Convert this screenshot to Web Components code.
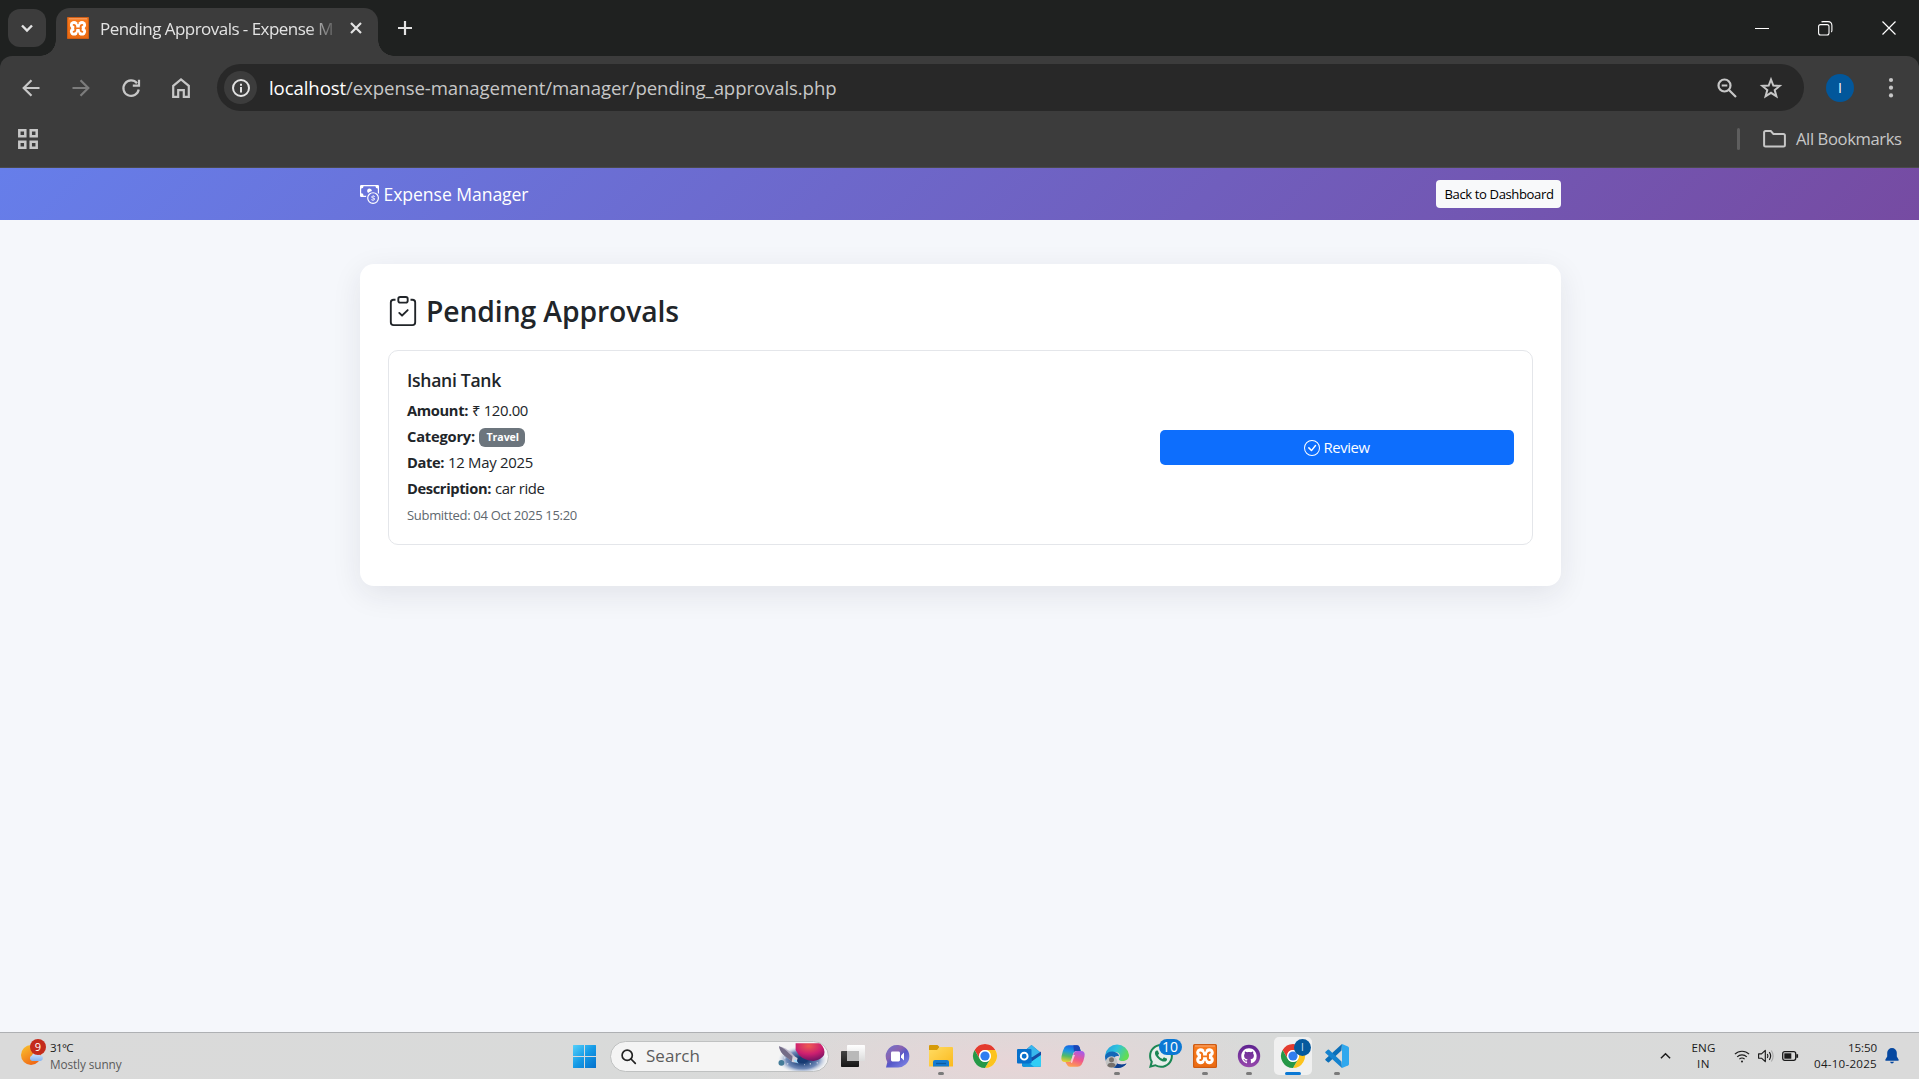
<!DOCTYPE html>
<html lang="en">
<head>
<meta charset="utf-8">
<title>Pending Approvals - Expense Manager</title>
<style>
html,body{margin:0;height:100%;overflow:hidden}
body{font-family:"Open Sans","Noto Sans",sans-serif;background:#f5f7fb}
</style>
</head>
<body>
<desktop-screen></desktop-screen>
<script>
const bi = (p, s='0 0 16 16') => `<svg viewBox="${s}" fill="currentColor">${p}</svg>`;
const st = (p, s, w=2, extra='') => `<svg viewBox="${s}" fill="none" stroke="currentColor" stroke-width="${w}" ${extra}>${p}</svg>`;
const chrome = `<svg viewBox="0 0 24 24"><circle cx="12" cy="12" r="12" fill="#fff"/>
<path d="M1.6 6A12 12 0 0 1 22.4 6H12a6 6 0 0 0-5.2 9z" fill="#e33b2e"/>
<path d="M22.4 6A12 12 0 0 1 12 24l5.2-9A6 6 0 0 0 12 6z" fill="#fcc31e"/>
<path d="M12 24A12 12 0 0 1 1.6 6l5.2 9a6 6 0 0 0 10.4 0z" fill="#269847"/>
<circle cx="12" cy="12" r="5.9" fill="#fff"/><circle cx="12" cy="12" r="4.6" fill="#2f7df0"/></svg>`;
const xampp = `<svg viewBox="0 0 24 24"><defs><linearGradient id="x" x2="0" y2="1"><stop stop-color="#e0722a"/><stop offset=".15" stop-color="#f87a1c"/><stop offset="1" stop-color="#ea6a12"/></linearGradient></defs><rect width="24" height="24" rx="1.5" fill="url(#x)"/><rect x=".6" y=".6" width="22.8" height="22.8" rx="1.2" fill="none" stroke="#c95a14" stroke-width="1"/><path d="M2 2h20" stroke="#ffae76" stroke-width="1"/>
<g fill="#fff"><circle cx="7.700" cy="8.800" r="4.500"/><circle cx="16.300" cy="8.800" r="4.500"/><circle cx="7.700" cy="15.800" r="4.500"/><circle cx="16.300" cy="15.800" r="4.500"/><rect x="5" y="8" width="14" height="8.500"/></g>
<g fill="none" stroke="#f2741a" stroke-width="2.100" stroke-linecap="round"><path d="M7.300 8.600Q9.600 8.600 9 12.300 9.600 16 7.300 16M16.700 8.600Q14.400 8.600 15 12.300 14.400 16 16.700 16"/><path d="M9 12.300h6" stroke-width="1.800"/></g><path d="M2.900 12.300l1.500-1.100v2.200zM21.100 12.300l-1.500-1.100v2.200zM12 8.200l-1-2h2zM12 16.400l-1 2h2z" fill="#f2741a"/></svg>`;
const ICONS = {
chevron: st('<path d="M1 1.500 6 6.500l5-5"/>','0 0 12 8',2.4),
close: st('<path d="M1 1l10 10M11 1 1 11"/>','0 0 12 12',2.2),
plus: st('<path d="M7 0v14M0 7h14"/>','0 0 14 14',2.2),
back: st('<path d="M17.500 9H2M9.500 1.200 1.700 9l7.800 7.800"/>','0 0 18 18',2.2),
forward: st('<path d="M.5 9H16M8.500 1.200 16.300 9l-7.800 7.800"/>','0 0 18 18',2.2),
reload: st('<path d="M16.700 10.500A7.700 7.700 0 1 1 15 4.200"/><path d="M17 .8V6.700H10.800" />','0 0 18 18',2.2),
home: st('<path d="M1.200 7.800 9 1.500l7.800 6.300V18.900H11.800V12.200H6.200v6.700H1.200z"/>','0 0 18 20',2.2),
info: st('<circle cx="9" cy="9" r="8"/><path d="M9 8v5.500M9 4.700v2"/>','0 0 18 18',2),
zoomout: st('<circle cx="7.500" cy="7.500" r="6"/><path d="M12 12l7 7M4.700 7.500h5.600"/>','0 0 20 20',2.2),
star: st('<path d="M11 2.500l2.300 6 6.400.4-5 4.100 1.700 6.300L11 15.800l-5.400 3.500L7.300 13l-5-4.100 6.400-.4z"/>','0 0 22 22',2),
apps: st('<path d="M1.300 1.300h6v6h-6zM12.700 1.300h6v6h-6zM1.300 12.700h6v6h-6zM12.700 12.700h6v6h-6z"/>','0 0 20 20',2.5),
folder: st('<path d="M1.100 2.600Q1.100 1.100 2.600 1.100H7.800l2.600 2.800H20.400q1.500 0 1.500 1.500V15q0 1.500-1.500 1.500H2.600q-1.500 0-1.500-1.500z"/>','0 0 23 18',2),
dots: bi('<circle cx="3" cy="3" r="2.100"/><circle cx="3" cy="10.700" r="2.100"/><circle cx="3" cy="18.400" r="2.100"/>','0 0 6 21'),
min: st('<path d="M0 .5h14"/>','0 0 14 1',1),
restore: st('<rect x=".6" y="3.600" width="10.400" height="10.400" rx="2"/><path d="M3.500 1.200Q4 .6 5 .6h5q3.900 0 3.900 3.900v5q0 1-.6 1.600"/>','0 0 14.500 14.500',1.1),
wclose: st('<path d="M.5 .5l13 13M13.500 .5l-13 13"/>','0 0 14 14',1.2),
cash: bi('<path fill-rule="evenodd" d="M11 15a4 4 0 1 0 0-8 4 4 0 0 0 0 8m5-4a5 5 0 1 1-10 0 5 5 0 0 1 10 0"/><path d="M9.438 11.944c.047.596.518 1.060 1.363 1.116v.44h.375v-.443c.875-.061 1.386-.529 1.386-1.207 0-.618-.39-.936-1.090-1.100l-.296-.07v-1.200c.376.043.614.248.671.532h.658c-.047-.575-.54-1.024-1.329-1.073V8.500h-.375v.45c-.747.073-1.255.522-1.255 1.158 0 .562.378.92 1.007 1.066l.248.061v1.272c-.384-.058-.639-.27-.696-.563h-.668zm1.360-1.354c-.369-.085-.569-.26-.569-.522 0-.294.216-.514.572-.578v1.100zm.432.746c.449.104.655.272.655.569 0 .339-.257.571-.709.614v-1.195z"/><path d="M1 0a1 1 0 0 0-1 1v8a1 1 0 0 0 1 1h4.083q.088-.517.258-1H3a2 2 0 0 0-2-2V3a2 2 0 0 0 2-2h10a2 2 0 0 0 2 2v3.528c.38.34.717.728 1 1.154V1a1 1 0 0 0-1-1z"/><path d="M9.998 5.083 10 5a2 2 0 1 0-3.132 1.650 6 6 0 0 1 3.130-1.567"/>'),
clip: bi('<path fill-rule="evenodd" d="M10.854 7.146a.5.5 0 0 1 0 .708l-3 3a.5.5 0 0 1-.708 0l-1.500-1.500a.5.5 0 1 1 .708-.708L7.500 9.793l2.646-2.647a.5.5 0 0 1 .708 0"/><path d="M4 1.500H3a2 2 0 0 0-2 2V14a2 2 0 0 0 2 2h10a2 2 0 0 0 2-2V3.500a2 2 0 0 0-2-2h-1v1h1a1 1 0 0 1 1 1V14a1 1 0 0 1-1 1H3a1 1 0 0 1-1-1V3.500a1 1 0 0 1 1-1h1z"/><path d="M9.500 1a.5.5 0 0 1 .5.5v1a.5.5 0 0 1-.5.5h-3a.5.5 0 0 1-.5-.5v-1a.5.5 0 0 1 .5-.5zm-3-1A1.500 1.500 0 0 0 5 1.500v1A1.500 1.500 0 0 0 6.500 4h3A1.500 1.500 0 0 0 11 2.500v-1A1.500 1.500 0 0 0 9.500 0z"/>'),
check: bi('<path d="M8 15A7 7 0 1 1 8 1a7 7 0 0 1 0 14m0 1A8 8 0 1 0 8 0a8 8 0 0 0 0 16"/><path d="m10.970 4.970-.02.022-3.473 4.425-2.093-2.094a.75.75 0 0 0-1.060 1.060L6.970 11.030a.75.75 0 0 0 1.079-.02l3.992-4.990a.75.75 0 0 0-1.071-1.050"/>'),
xampp, chrome,
weather:`<svg viewBox="0 0 24 24"><defs><linearGradient id="s" x1=".2" x2=".8" y2="1"><stop stop-color="#f9bd2d"/><stop offset="1" stop-color="#ef5f13"/></linearGradient><linearGradient id="c" x2="0" y2="1"><stop stop-color="#d8e8fb"/><stop offset="1" stop-color="#86b4f2"/></linearGradient></defs><circle cx="10" cy="12" r="10" fill="url(#s)"/><path d="M11 18a3 3 0 0 1-.3-5.600 4.500 4.500 0 0 1 8-.5A3.100 3.100 0 0 1 19.500 18z" fill="url(#c)"/></svg>`,
win:`<svg viewBox="0 0 23 23"><defs><linearGradient id="v" gradientUnits="userSpaceOnUse" x1="0" y1="0" x2="23" y2="23"><stop stop-color="#55d0fa"/><stop offset=".5" stop-color="#159ae6"/><stop offset="1" stop-color="#0470cc"/></linearGradient></defs><path d="M0 .5Q0 0 .5 0H11v11H0zM12 0h10.500q.5 0 .5.500V11H12zM0 12h11v11H.5q-.5 0-.5-.5zM12 12h11v10.500q0 .5-.5.500H12z" fill="url(#v)"/></svg>`,
search: st('<circle cx="6.200" cy="6.200" r="5.100"/><path d="M10 10l4.300 4.300" stroke-linecap="round"/>','0 0 15 15',1.7),
space:`<svg viewBox="0 0 50 26"><defs><radialGradient id="b"><stop offset=".2" stop-color="#173b73"/><stop offset=".65" stop-color="#4d6ea8" stop-opacity=".8"/><stop offset="1" stop-color="#c7d3e8" stop-opacity="0"/></radialGradient><radialGradient id="p" cx=".45" cy=".15" r=".85"><stop stop-color="#ee5b50"/><stop offset=".55" stop-color="#cc1f70"/><stop offset="1" stop-color="#721463"/></radialGradient></defs><ellipse cx="26" cy="17" rx="25" ry="14" fill="url(#b)"/><path d="M19 0H44Q50 6 48 12 45 17 37 18 24 18 19 7Z" fill="url(#p)"/><circle cx="4.500" cy="20" r="3" fill="#447c99"/><path d="M2 3Q8 4 14 9l6 6-4 4-8-6Q3 9 2 3z" fill="#b8b3c7"/><path d="M2 3Q8 5 13 11l6 5-3 3-8-6Q3 9 2 3z" fill="#746c87"/><path d="M16 13l5 2-1 5-5-1z" fill="#d5d2dc"/><path d="M19 16l3 5-5-3z" fill="#9cdcff"/><g fill="#fff"><circle cx="11" cy="21" r=".6"/><circle cx="34" cy="21" r=".7"/><circle cx="41" cy="20" r=".6"/><circle cx="8" cy="15" r=".6"/><circle cx="28" cy="22" r=".5"/></g></svg>`,
taskview:`<svg viewBox="0 0 24 24"><defs><linearGradient id="t" x2="0" y2="1"><stop stop-color="#444"/><stop offset="1" stop-color="#151515"/></linearGradient><linearGradient id="u" x2="0" y2="1"><stop stop-color="#fff"/><stop offset="1" stop-color="#dcdcdc"/></linearGradient></defs><rect y="7" width="18" height="16" rx=".8" fill="url(#t)"/><rect x="6" y="1" width="18" height="16" rx=".8" fill="url(#u)"/><rect x="6" y="7" width="12" height="10" fill="#b9b9b9"/></svg>`,
chat:`<svg viewBox="0 0 24 24"><defs><linearGradient id="h" x2=".8" y2="1"><stop stop-color="#6d74cf"/><stop offset=".4" stop-color="#8a63b0"/><stop offset=".6" stop-color="#5557c9"/><stop offset="1" stop-color="#7e84e4"/></linearGradient></defs><path d="M12 1a11.300 11.300 0 1 1 0 22.500H1l1.300-5.500A11.300 11.300 0 0 1 12 1z" fill="url(#h)"/><rect x="6" y="7.500" width="9" height="10" rx="1.400" fill="#fff"/><path d="M16 11.500l3-3v8l-3-3z" fill="#fff"/></svg>`,
files:`<svg viewBox="0 0 24 24"><defs><linearGradient id="f" x2="1" y2="1"><stop stop-color="#ffdc63"/><stop offset="1" stop-color="#fbb91d"/></linearGradient></defs><path d="M0 2Q0 1 1 1H8.500l2 2-2 3H0z" fill="#d69a09"/><path d="M0 6h8l3-3H23q1 0 1 1V22q0 .6-.6.600H.6Q0 22.600 0 22z" fill="url(#f)"/><path d="M4 22.600V18q0-2 2-2H18q2 0 2 2v4.600z" fill="#147bd1"/><path d="M7 19.500H17" stroke="#0c5b9f" stroke-width="1.300"/></svg>`,
outlook:`<svg viewBox="0 0 24 24"><path d="M5 9L14.500 1 24 9v12.500q0 1.300-1.300 1.300H6.500Q5 22.800 5 21z" fill="#1171c4"/><path d="M9 6l5.500-5L24 9l-6 4H9z" fill="#39b7ed"/><path d="M24 10L8 22.800H22.500q1.500 0 1.500-1.500z" fill="#31cdf5"/><path d="M5 14l12 8.800H7q-2 0-2-2z" fill="#1194dc"/><path d="M14 14l10-6.500V11l-9 6z" fill="#174ba3"/><rect y="5" width="14.500" height="14.500" rx="1" fill="#0870cb"/><circle cx="7.200" cy="12.200" r="3.400" stroke="#fff" stroke-width="1.900" fill="none"/></svg>`,
copilot:`<svg viewBox="0 0 24 24"><defs><linearGradient id="k" x1=".4" x2=".2" y2="1"><stop stop-color="#1663e2"/><stop offset=".35" stop-color="#1e99df"/><stop offset=".65" stop-color="#53bb65"/><stop offset="1" stop-color="#f5cf2c"/></linearGradient><linearGradient id="l" x1=".7" x2=".3" y2="1"><stop stop-color="#a85be8"/><stop offset=".5" stop-color="#f0588a"/><stop offset="1" stop-color="#ffa34c"/></linearGradient></defs><path d="M7.500 1.200H16q2 0 2.600 2L19.700 7H15q-2 0-2.600 2l-2 6.500Q9.700 18 7 18H4Q-.500 18 .5 12.500q1-6 3-9.300Q5 1.200 7.500 1.200z" fill="url(#k)"/><path d="M12.400 1.200H16q2 0 2.600 2L19.700 7H15q-1.500 0-2 1z" fill="#1b46b5"/><path d="M16.500 22.800H9q-2.300 0-3-2L4.400 18H8q2 0 2.600-2l2.300-7Q13.600 7 16 7h4q4.500 0 3.500 5.500-1 5.500-3 8.300-1.500 2-4 2z" fill="url(#l)"/><path d="M12 11l-2 6.500Q9.400 19 11 19l3-8z" fill="#fff" opacity=".65"/></svg>`,
edge:`<svg viewBox="0 0 24 24"><defs><linearGradient id="e" x2="1" y2=".4"><stop stop-color="#249bd9"/><stop offset=".5" stop-color="#2fc2df"/><stop offset="1" stop-color="#62dc55"/></linearGradient></defs><path d="M.2 11A12 12 0 0 1 24 11c0 4.500-3.500 6-6.500 6-3.500 0-4.200-1.500-3-3 1.500-3-.5-6-5-6C5 8 1 10 .2 14z" fill="url(#e)"/><path d="M0 12.500C1 8.500 5 7 9 7.800c3 .7 5 2.500 5 4.500-2-1-5-.3-5 3.200 0 4.500 6 7 12.500 4C18 24 14 24 12 24 5 24 0 19 0 12.500z" fill="#1467b7"/><path d="M9 14.500c-.2 5 6.500 7.500 12.500 5-2.500 3.500-6.500 4.500-9.500 4.500-3 0-7-5-3-9.500z" fill="#103f8f"/><circle cx="6.500" cy="18" r="5.800" fill="#c4c4c4"/><circle cx="6.500" cy="15.800" r="2.500" fill="#77706c"/><path d="M2.300 22q.4-3.200 4.200-3.200t4.200 3.200Q6.500 25 2.300 22z" fill="#77706c"/></svg>`,
whatsapp:`<svg viewBox="0 0 16 16" fill="#1a8754"><circle cx="8" cy="8" r="7" fill="#e6eeea"/><path d="M13.601 2.326A7.850 7.850 0 0 0 7.994 0C3.627 0 .068 3.558.064 7.926c0 1.399.366 2.760 1.057 3.965L0 16l4.204-1.102a7.900 7.900 0 0 0 3.790.965h.004c4.368 0 7.926-3.558 7.930-7.930A7.900 7.900 0 0 0 13.600 2.326zM7.994 14.521a6.600 6.600 0 0 1-3.356-.92l-.24-.144-2.494.654.666-2.433-.156-.251a6.560 6.560 0 0 1-1.007-3.505c0-3.626 2.957-6.584 6.591-6.584a6.560 6.560 0 0 1 4.660 1.931 6.560 6.560 0 0 1 1.928 4.660c-.004 3.639-2.961 6.592-6.592 6.592m3.615-4.934c-.197-.099-1.170-.578-1.353-.646-.182-.065-.315-.099-.445.099-.133.197-.513.646-.627.775-.114.133-.232.148-.43.05-.197-.1-.836-.308-1.592-.985-.59-.525-.985-1.175-1.103-1.372-.114-.198-.011-.304.088-.403.087-.088.197-.232.296-.346.1-.114.133-.198.198-.33.065-.134.034-.248-.015-.347-.05-.099-.445-1.076-.612-1.470-.16-.389-.323-.335-.445-.34-.114-.007-.247-.007-.38-.007a.73.73 0 0 0-.529.247c-.182.198-.691.677-.691 1.654s.71 1.916.81 2.049c.098.133 1.394 2.132 3.383 2.992.47.205.84.326 1.129.418.475.152.904.129 1.246.08.38-.058 1.171-.48 1.338-.943.164-.464.164-.86.114-.992-.049-.133-.182-.198-.38-.297"/></svg>`,
github:`<svg viewBox="0 0 24 24"><defs><linearGradient id="g" x2="0" y2="1"><stop stop-color="#5e2290"/><stop offset="1" stop-color="#9648ac"/></linearGradient></defs><circle cx="12" cy="12" r="11.200" fill="url(#g)"/><path transform="translate(4.300 4.300) scale(.96)" fill="#fff" d="M8 0C3.580 0 0 3.580 0 8c0 3.540 2.290 6.530 5.470 7.590.4.07.55-.17.55-.38 0-.19-.01-.82-.01-1.490-2.010.37-2.530-.49-2.690-.94-.09-.23-.48-.94-.82-1.130-.28-.15-.68-.52-.01-.53.63-.01 1.080.58 1.230.82.72 1.210 1.870.87 2.330.66.07-.52.28-.87.51-1.070-1.780-.2-3.640-.89-3.640-3.950 0-.87.31-1.590.82-2.150-.08-.2-.36-1.020.08-2.120 0 0 .67-.21 2.200.82.64-.18 1.320-.27 2-.27s1.360.09 2 .27c1.530-1.040 2.200-.82 2.200-.82.44 1.100.16 1.920.08 2.120.51.56.82 1.270.82 2.150 0 3.070-1.870 3.750-3.650 3.950.29.25.54.73.54 1.480 0 1.070-.01 1.930-.01 2.200 0 .21.15.46.55.38A8.010 8.010 0 0 0 16 8c0-4.420-3.580-8-8-8"/></svg>`,
vscode:`<svg viewBox="0 0 24 24"><path d="M17 0l-.5 6.500L4 18.200q-.6.500-1.200 0L.5 16.200q-.7-.6 0-1.300z" fill="#0b6fb8"/><path d="M17 24l-.5-6.500L4 5.800q-.6-.5-1.200 0L.5 7.800q-.7.600 0 1.300z" fill="#1583cf"/><path d="M17 24V0l6 2.600q1 .5 1 1.500v15.800q0 1-1 1.500z" fill="#2fa8ee"/></svg>`,
up: st('<path d="M1 6.500 6 1.500l5 5"/>','0 0 12 8',1.6),
wifi: st('<path d="M.9 5.200a10 10 0 0 1 14.200 0M3.200 7.800a6.800 6.800 0 0 1 9.600 0M5.400 10.200a3.700 3.700 0 0 1 5.200 0"/><circle cx="8" cy="12.400" r="1" fill="currentColor" stroke="none"/>','0 0 16 14',1.15),
sound: st('<path d="M.6 4.800H3.500L7.300 1.300v11.400L3.500 9.200H.6z" stroke-linejoin="round"/><path d="M9.300 5q1.300 2 0 4M11.300 3.200q2.700 3.800 0 7.600"/><path d="M13.300 1.500q3.700 5.500 0 11" stroke="#aaa"/>','0 0 16 14',1.15),
battery: st('<rect x=".7" y=".7" width="13" height="8.600" rx="2"/><path d="M15.200 3.200v3.600" stroke-width="1.800"/><rect x="2.300" y="2.300" width="7" height="5.400" fill="currentColor" stroke="none"/>','0 0 16.500 10',1.3),
bell:`<svg viewBox="0 0 14 16" fill="#0648a0"><path d="M7 0a4.800 4.800 0 0 1 4.800 4.800v3.700l1.800 3q.5 1.200-.6 1.200H1q-1.100 0-.6-1.200l1.800-3V4.800A4.800 4.800 0 0 1 7 0zM5 13.700h4q-.5 1.700-2 1.700t-2-1.700z"/></svg>`
};
function define(name, css, html, after){
  customElements.define(name, class extends HTMLElement{
    connectedCallback(){
      if(this.shadowRoot) return;
      const body = typeof html==='function' ? html(this) : html;
      this.attachShadow({mode:'open'}).innerHTML = `<style>*{box-sizing:border-box}:host{box-sizing:border-box}${css}</style>${body}`;
      if(after) after(this);
    }
  });
}
/* icon: w/h attributes give the drawn box */
define('ui-icon', ':host{display:block;flex:none}svg{display:block;width:100%;height:100%;overflow:visible}',
  el=>{el.style.width=el.getAttribute('w')+'px';el.style.height=(el.getAttribute('h')||el.getAttribute('w'))+'px';return ICONS[el.getAttribute('name')]});
/* single-line label tracked to an exact width */
define('fit-text', ':host{display:block;flex:none;white-space:nowrap}span{display:inline-block}', '<span><slot></slot></span>', el=>{
  const w=+el.getAttribute('w'), s=el.shadowRoot.querySelector('span');
  el.style.fontSize=el.getAttribute('s')+'px'; el.style.width=w+'px';
  const n=el.textContent.length;
  s.style.letterSpacing=((w-s.getBoundingClientRect().width)/n).toFixed(4)+'px';
});
define('browser-tabs', `:host{display:flex;height:56px;background:#1f2120;padding:8px 0 0 8px;align-items:flex-start;color:#e3e3e3}
.search{width:38px;height:38px;border-radius:12px;background:#3c3c3c;margin-top:1px;display:flex;align-items:center;justify-content:center}
.tab{position:relative;width:322px;height:48px;margin-left:10px;background:#3c3c3c;border-radius:14px 14px 0 0;display:flex;align-items:center;padding:0 16px 8px 11px}
.tab:before,.tab:after{content:"";position:absolute;bottom:0;width:16px;height:16px}
.tab:before{left:-16px;background:radial-gradient(circle at 0 0,transparent 15.500px,#3c3c3c 16px)}
.tab:after{right:-16px;background:radial-gradient(circle at 100% 0,transparent 15.500px,#3c3c3c 16px)}
fit-text{margin:0 17px 0 11px;-webkit-mask:linear-gradient(90deg,#000 208px,transparent 240px)}
.plus{margin:13px auto 0 20px}
.win{display:flex;align-items:center;height:40px;color:#fff;gap:49px;padding-right:23px}`,
`<div class="search"><ui-icon name="chevron" w="12" h="8"></ui-icon></div>
<div class="tab"><ui-icon name="xampp" w="22"></ui-icon><fit-text w="233" s="17">Pending Approvals - Expense M</fit-text><ui-icon name="close" w="12"></ui-icon></div>
<ui-icon class="plus" name="plus" w="14"></ui-icon>
<div class="win"><ui-icon name="min" w="14" h="1"></ui-icon><ui-icon name="restore" w="14.5" style="margin-right:1px"></ui-icon><ui-icon name="wclose" w="14"></ui-icon></div>`);
define('browser-toolbar', `:host{display:block;background:#1f2120;height:64px}
.bar{background:#3c3c3c;border-radius:12px 12px 0 0;height:64px;display:flex;align-items:center;padding:0 25px 1px 22px;color:#c7c7c7}
.nav{display:flex;width:195px;align-items:center;gap:32px}
.omni{width:1587px;height:47px;border-radius:24px;background:#282828;display:flex;align-items:center;padding:0 22px 0 7px;margin-right:22px}
.i{width:33px;height:33px;border-radius:50%;background:#3c3c3c;display:flex;align-items:center;justify-content:center;color:#e3e3e3;margin-right:12px}
.z{margin-left:auto}.s{margin-left:23px}
b{color:#fff;font-weight:400}
.av{width:28px;height:28px;border-radius:50%;background:#02579b;color:#fff;font-size:14px;line-height:28px;text-align:center;margin-right:34px}`,
`<div class="bar"><div class="nav"><ui-icon name="back" w="18"></ui-icon><ui-icon name="forward" w="18" style="color:#7c7c7c"></ui-icon><ui-icon name="reload" w="18"></ui-icon><ui-icon name="home" w="18" h="20"></ui-icon></div>
<div class="omni"><div class="i"><ui-icon name="info" w="18"></ui-icon></div><fit-text w="567.5" s="18.6"><b>localhost</b>/expense-management/manager/pending_approvals.php</fit-text><ui-icon class="z" name="zoomout" w="20"></ui-icon><ui-icon class="s" name="star" w="22"></ui-icon></div>
<div class="av">I</div><ui-icon name="dots" w="6" h="21"></ui-icon></div>`);
define('bookmarks-bar', `:host{display:flex;height:48px;background:#3c3c3c;border-bottom:1px solid #4a4a4a;align-items:flex-start;padding:9px 17.500px 0 18px;color:#c7c7c7}
i{width:3px;height:22px;background:#5e5e5e;border-radius:2px;margin:-1px 23px 0 auto}
.f{margin-top:1px}fit-text{margin-left:10px;line-height:20px}`,
`<ui-icon name="apps" w="20"></ui-icon><i></i><ui-icon class="f" name="folder" w="23" h="18"></ui-icon><fit-text w="105.5" s="16.6">All Bookmarks</fit-text>`);
define('app-navbar', `:host{display:flex;height:52px;background:linear-gradient(135deg,#667eea 0%,#764ba2 100%);padding:0 358px 0 360px;align-items:center;color:#fff}
.n{margin-left:4.500px;margin-right:auto}
.b{height:28px;width:125px;background:#f8f9fa;border-radius:4px;color:#000;padding-left:8.500px;line-height:28px}`,
`<ui-icon name="cash" w="19"></ui-icon><fit-text class="n" w="145" s="17.6">Expense Manager</fit-text><div class="b"><fit-text w="109" s="13.1">Back to Dashboard</fit-text></div>`);
define('field-row', `:host{display:flex;height:26px;line-height:24px;gap:4px}`, '<slot></slot>');
define('approval-card', `:host{display:flex;height:195px;border:1px solid #e4e6ea;border-radius:10px;padding:16px 18px 0 18px;justify-content:space-between}
.name{font-weight:600;line-height:26px;margin-bottom:5px}
fit-text.b{font-weight:700}
.badge{width:46px;height:19px;border-radius:6px;background:#6c757d;color:#fff;font-weight:700;line-height:19px;padding-left:7.500px;margin-top:4px}
.sub{color:#60676e;line-height:26px}
.btn{width:354px;height:35px;border-radius:5px;background:#0d6efd;color:#fff;display:flex;align-items:center;justify-content:center;gap:4px;margin-top:63px;line-height:32px;padding-right:1px}
.btn fit-text{height:34px}`,
`<div><fit-text class="name" w="94" s="17.6">Ishani Tank</fit-text>
<field-row><fit-text class="b" w="61" s="14.7">Amount:</fit-text><fit-text w="56" s="14.9">₹ 120.00</fit-text></field-row>
<field-row><fit-text class="b" w="68" s="14.7">Category:</fit-text><div class="badge"><fit-text w="32.5" s="10.6">Travel</fit-text></div></field-row>
<field-row><fit-text class="b" w="37" s="14.7">Date:</fit-text><fit-text w="85" s="14.9">12 May 2025</fit-text></field-row>
<field-row><fit-text class="b" w="84" s="14.7">Description:</fit-text><fit-text w="49.5" s="14.9">car ride</fit-text></field-row>
<field-row><fit-text class="sub" w="170" s="13">Submitted: 04 Oct 2025 15:20</fit-text></field-row></div>
<div class="btn"><ui-icon name="check" w="16"></ui-icon><fit-text w="46" s="14.9">Review</fit-text></div>`);
define('content-panel', `:host{display:block;width:1201px;height:322px;margin:44px 0 0 360px;background:#fff;border-radius:14px;box-shadow:0 8px 30px rgba(30,30,60,.09);padding:31px 28px;color:#212529}
.h{display:flex;height:31px;align-items:center;margin-bottom:24px;gap:8px}
.h fit-text{font-weight:600;line-height:33px;height:31px}`,
`<div class="h"><ui-icon name="clip" w="30"></ui-icon><fit-text w="253" s="28.3">Pending Approvals</fit-text></div><slot></slot>`);
define('task-item', `:host{display:flex;position:relative;width:44px;height:46px;align-items:center;justify-content:center;flex:none}
:host([active]):before{content:"";position:absolute;inset:4px 3px;background:#f0f0f0;border-radius:5px}
ui-icon{position:relative}
.d{position:absolute;bottom:4px;left:19px;width:6px;height:3px;border-radius:2px;background:#7a7a7a}
:host([active]) .d{left:14px;width:16px;background:#0a78d4}
.g{position:absolute;top:6px;left:19.500px;width:23px;height:16px;border-radius:8px;background:#0b78d4;color:#fff;font-size:14px;line-height:16px;text-align:center}
:host([active]) .g{width:17px;height:17px;left:23px;background:#055a9e;font-size:10px;border-radius:50%;color:#cfe3f5}`,
el=>`<ui-icon name="${el.getAttribute('icon')}" w="24"></ui-icon>${el.hasAttribute('run')?'<div class="d"></div>':''}${el.hasAttribute('badge')?`<div class="g">${el.getAttribute('badge')}</div>`:''}`);
define('task-bar', `:host{display:flex;flex:none;height:47px;border-top:1px solid #aeb0b3;background:radial-gradient(ellipse 260px 60px at 1010px 30px,#e7d5d7,rgba(218,218,218,0)),linear-gradient(90deg,#dadada,#d8dad9 60%,#dadada);align-items:center;color:#1b1b1b}
.w{display:flex;width:573px;padding-left:21px;align-items:center;position:relative}
.w>ui-icon{margin-top:-2px}
.bd{position:absolute;left:30px;top:-1px;width:16px;height:16px;border-radius:50%;background:#c42b1c;color:#fff;font-size:11px;line-height:16px;text-align:center}
.wt{margin-left:5px;line-height:16px}.wt .m{color:#5a5a5a}
.s{display:flex;width:219px;height:31px;border:1px solid #bfc1c1;border-radius:16px;background:#f4f4f4;margin:0 2px 0 14px;padding:0 2px 0 10px;align-items:center;color:#5c5c5c;overflow:hidden}
.s fit-text{margin:0 auto 0 10px;line-height:28px}
.tray{margin-left:auto;display:flex;align-items:center;padding-right:20px;line-height:16px}
.r{display:flex;flex-direction:column;align-items:flex-end}.c{display:flex;flex-direction:column;align-items:center}`,
`<div class="w"><ui-icon name="weather" w="24"></ui-icon><div class="bd">9</div><div class="wt"><fit-text w="23" s="11.6">31°C</fit-text><fit-text class="m" w="71.5" s="11.8">Mostly sunny</fit-text></div></div>
<ui-icon name="win" w="23"></ui-icon>
<div class="s"><ui-icon name="search" w="15" style="color:#222"></ui-icon><fit-text w="54" s="17">Search</fit-text><ui-icon name="space" w="49" h="26"></ui-icon></div>
<task-item icon="taskview"></task-item><task-item icon="chat"></task-item><task-item icon="files" run></task-item><task-item icon="chrome"></task-item><task-item icon="outlook"></task-item><task-item icon="copilot"></task-item><task-item icon="edge" run></task-item><task-item icon="whatsapp" badge="10"></task-item><task-item icon="xampp" run></task-item><task-item icon="github" run></task-item><task-item icon="chrome" active run badge="I"></task-item><task-item icon="vscode" run></task-item>
<div class="tray"><ui-icon name="up" w="11" h="8" style="margin-right:21px"></ui-icon><div class="c" style="margin-right:18px"><fit-text w="24" s="11.6">ENG</fit-text><fit-text w="13" s="11.6">IN</fit-text></div>
<ui-icon name="wifi" w="16" h="14" style="margin-right:8px"></ui-icon><ui-icon name="sound" w="16" h="14" style="margin-right:8px"></ui-icon><ui-icon name="battery" w="16.5" h="10" style="margin-right:16px"></ui-icon>
<div class="r" style="margin-right:8px"><fit-text w="29" s="11.6">15:50</fit-text><fit-text w="63" s="11.6">04-10-2025</fit-text></div><ui-icon name="bell" w="14" h="16"></ui-icon></div>`);
define('desktop-screen', `:host{display:flex;flex-direction:column;width:1919px;height:1079px;overflow:hidden}
main{flex:1 0 0;background:#f5f7fb;display:flex;align-items:flex-start}`,
`<browser-tabs></browser-tabs><browser-toolbar></browser-toolbar><bookmarks-bar></bookmarks-bar><app-navbar></app-navbar><main><content-panel><approval-card></approval-card></content-panel></main><task-bar></task-bar>`);
</script>
</body>
</html>
